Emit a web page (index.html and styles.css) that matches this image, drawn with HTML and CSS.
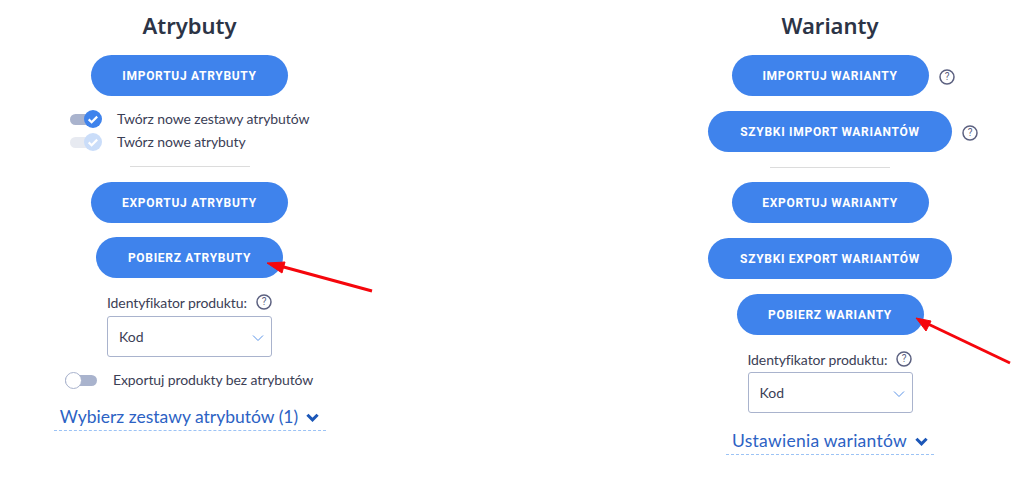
FILE: index.html
```html
<!DOCTYPE html>
<html lang="pl">
<head>
<meta charset="utf-8">
<title>Atrybuty i warianty</title>
<link rel="stylesheet" href="styles.css">
</head>
<body>
<main class="page">
  <section class="col col-left">
    <h2 class="title">Atrybuty</h2>
    <button class="btn">IMPORTUJ ATRYBUTY</button>
    <div class="checks">
      <div class="check-row">
        <span class="toggle on"><svg viewBox="0 0 18 18" class="knob-svg"><circle cx="9" cy="9" r="9" fill="#3f83ec"/><path d="M4.7 9.4l2.9 2.8 5.6-5.6" fill="none" stroke="#fff" stroke-width="2.2"/></svg></span>
        <span class="check-label">Twórz nowe zestawy atrybutów</span>
      </div>
      <div class="check-row">
        <span class="toggle on faded"><svg viewBox="0 0 18 18" class="knob-svg"><circle cx="9" cy="9" r="9" fill="#3f83ec"/><path d="M4.7 9.4l2.9 2.8 5.6-5.6" fill="none" stroke="#fff" stroke-width="2.2"/></svg></span>
        <span class="check-label">Twórz nowe atrybuty</span>
      </div>
    </div>
    <hr class="divider">
    <button class="btn">EXPORTUJ ATRYBUTY</button>
    <button class="btn btn-narrow gap-14">POBIERZ ATRYBUTY</button>
    <div class="field">
      <div class="field-label">Identyfikator produktu:
        <svg class="help" viewBox="0 0 16 16"><circle cx="8" cy="8" r="7" fill="none" stroke="#5c6180" stroke-width="1.5"/><text x="8" y="11.4" text-anchor="middle" class="help-q">?</text></svg>
      </div>
      <div class="select">Kod<svg class="caret" viewBox="0 0 12 8"><path d="M1 1.5l5 5 5-5" fill="none" stroke="#5b94e8" stroke-width="1"/></svg></div>
    </div>
    <div class="off-row">
      <span class="toggle off"><span class="knob"></span></span>
      <span class="check-label">Exportuj produkty bez atrybutów</span>
    </div>
    <a class="more more-left">Wybierz zestawy atrybutów (1)
      <svg class="chev" viewBox="0 0 12 8"><path d="M1.3 1.5L6 6.2l4.7-4.7" fill="none" stroke="#1c57b8" stroke-width="2.8"/></svg>
    </a>
  </section>

  <section class="col col-right">
    <h2 class="title">Warianty</h2>
    <div class="btn-wrap">
      <button class="btn">IMPORTUJ WARIANTY</button>
      <svg class="help help-side" viewBox="0 0 16 16"><circle cx="8" cy="8" r="7" fill="none" stroke="#5c6180" stroke-width="1.5"/><text x="8" y="11.4" text-anchor="middle" class="help-q">?</text></svg>
    </div>
    <div class="btn-wrap gap-15">
      <button class="btn btn-wide">SZYBKI IMPORT WARIANTÓW</button>
      <svg class="help help-side" viewBox="0 0 16 16"><circle cx="8" cy="8" r="7" fill="none" stroke="#5c6180" stroke-width="1.5"/><text x="8" y="11.4" text-anchor="middle" class="help-q">?</text></svg>
    </div>
    <hr class="divider divider-right">
    <button class="btn">EXPORTUJ WARIANTY</button>
    <button class="btn btn-wide gap-15">SZYBKI EXPORT WARIANTÓW</button>
    <button class="btn btn-narrow gap-15">POBIERZ WARIANTY</button>
    <div class="field field-right">
      <div class="field-label">Identyfikator produktu:
        <svg class="help" viewBox="0 0 16 16"><circle cx="8" cy="8" r="7" fill="none" stroke="#5c6180" stroke-width="1.5"/><text x="8" y="11.4" text-anchor="middle" class="help-q">?</text></svg>
      </div>
      <div class="select">Kod<svg class="caret" viewBox="0 0 12 8"><path d="M1 1.5l5 5 5-5" fill="none" stroke="#5b94e8" stroke-width="1"/></svg></div>
    </div>
    <a class="more more-right">Ustawienia wariantów
      <svg class="chev" viewBox="0 0 12 8"><path d="M1.3 1.5L6 6.2l4.7-4.7" fill="none" stroke="#1c57b8" stroke-width="2.8"/></svg>
    </a>
  </section>
</main>
<svg class="arrows" viewBox="0 0 1028 482" aria-hidden="true">
  <path d="M372 291L280 266" stroke="#f5060c" stroke-width="3" fill="none"/>
  <path d="M267 263L285 262L282 273Z" fill="#f5060c" stroke="#f5060c"/>
  <path d="M1010 363L926 323" stroke="#f5060c" stroke-width="3" fill="none"/>
  <path d="M916 318L931 321L926 331Z" fill="#f5060c" stroke="#f5060c"/>
</svg>
</body>
</html>
```
FILE: styles.css
```css
* { box-sizing: border-box; }
html, body { margin: 0; padding: 0; background: #fff; }
body {
  position: relative;
  width: 1028px;
  height: 482px;
  overflow: hidden;
  font-family: "Lato", "Noto Sans", sans-serif;
  color: #3b4056;
}
.page {
  display: flex;
  justify-content: space-between;
  padding-right: 8px;
}
.col {
  display: flex;
  flex-direction: column;
  align-items: center;
}
.col-left { width: 379px; }
.col-right { width: 380px; }
.title {
  margin: 10px 0 0;
  height: 45px;
  font-family: "Noto Sans", sans-serif;
  font-size: 22px;
  line-height: 30px;
  font-weight: 600;
  color: #2c3446;
}
.btn {
  display: block;
  width: 197px;
  height: 41px;
  padding: 0;
  border: 0;
  border-radius: 21px;
  background: #3f83ec;
  color: #fff;
  font-family: "Roboto", sans-serif;
  font-size: 12px;
  font-weight: 700;
  letter-spacing: .7px;
  text-align: center;
}
.btn-narrow { width: 187px; }
.btn-wide { width: 244px; }
.gap-14 { margin-top: 14px; }
.gap-15 { margin-top: 15px; }
.checks {
  width: 240px;
  margin-top: 12px;
  display: flex;
  flex-direction: column;
  align-self: flex-start;
  margin-left: 70px;
}
.check-row {
  display: flex;
  align-items: center;
  height: 23px;
}
.check-label {
  font-size: 14px;
  line-height: 20px;
  letter-spacing: -.1px;
  padding-bottom: 1px;
  white-space: nowrap;
}
.toggle {
  position: relative;
  flex: none;
  display: block;
  height: 11px;
  border-radius: 6px;
  background: #a9b3cd;
}
.toggle.on { width: 26px; margin-right: 21px; }
.knob-svg {
  position: absolute;
  right: -6px;
  top: -4px;
  width: 18px;
  height: 18px;
}
.faded { opacity: .27; }
.divider {
  width: 120px;
  height: 1px;
  margin: 12px 0 15px;
  border: 0;
  background: #dcdcdc;
}
.divider-right { margin: 15px 0 14px; }
.field {
  width: 165px;
  margin-top: 14px;
}
.field-label {
  display: flex;
  align-items: center;
  gap: 9px;
  height: 20px;
  font-size: 14px;
  letter-spacing: -.1px;
  white-space: nowrap;
}
.help { width: 16px; height: 16px; flex: none; }
.help-q { font: 400 10px "Roboto", sans-serif; fill: #5c6180; }
.btn-wrap { position: relative; }
.btn-wrap .help-side {
  position: absolute;
  left: calc(100% + 10px);
  top: 14px;
}
.select {
  position: relative;
  height: 41px;
  margin-top: 4px;
  padding: 0 11px;
  border: 1px solid #a9b3cd;
  border-radius: 3px;
  display: flex;
  align-items: center;
  font-size: 14px;
}
.field-right .select { margin-top: 3px; }
.caret {
  position: absolute;
  right: 7px;
  top: 17px;
  width: 12px;
  height: 8px;
}
.off-row {
  display: flex;
  align-items: center;
  align-self: flex-start;
  margin: 13px 0 0 65px;
  height: 20px;
}
.toggle.off { width: 32px; margin-right: 16px; }
.toggle .knob {
  position: absolute;
  left: 0;
  top: -3px;
  width: 17px;
  height: 17px;
  border-radius: 50%;
  background: #fff;
  border: 1px solid #a9b3cd;
}
.more {
  display: flex;
  align-items: center;
  justify-content: center;
  gap: 8px;
  padding-top: 4px;
  border-bottom: 1px dashed #9cc3f5;
  color: #2c62c4;
  font-size: 17.5px;
  line-height: 24px;
  white-space: nowrap;
}
.more-left { width: 272px; height: 31px; margin-top: 10px; }
.more-right { width: 208px; height: 31px; margin-top: 11px; letter-spacing: .25px; }
.chev { width: 13px; height: 9px; flex: none; }
.arrows {
  position: absolute;
  left: 0;
  top: 0;
  width: 1028px;
  height: 482px;
  pointer-events: none;
}
```
